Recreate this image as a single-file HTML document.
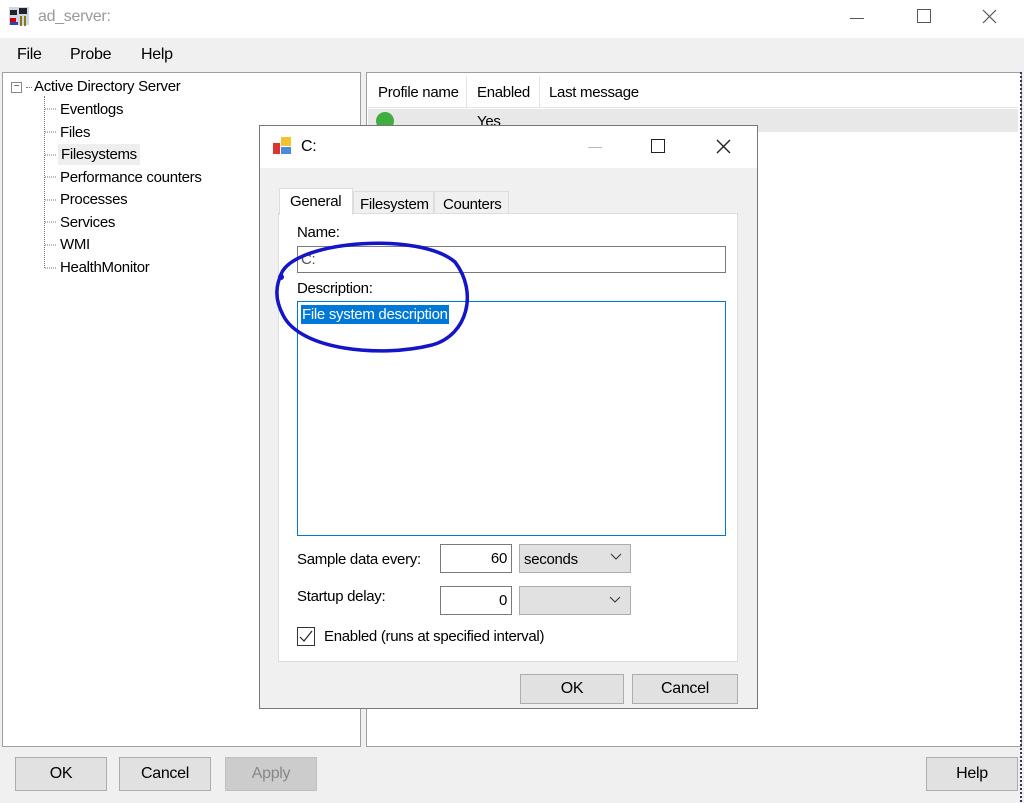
<!DOCTYPE html>
<html><head><style>
*{box-sizing:border-box}
body{margin:0;width:1024px;height:803px;background:#f0f0f0;font-family:"Liberation Sans",sans-serif;font-size:15px;color:#000;position:relative;overflow:hidden;letter-spacing:-0.3px;white-space:nowrap}
.a{position:absolute}
.btn{position:absolute;background:#e1e1e1;border:1px solid #adadad;text-align:center;line-height:31px;font-size:16px}
.tree div{position:absolute;left:60px;font-size:15px;white-space:nowrap}
</style></head><body>
<div class="a" style="left:0;top:0;width:1024px;height:38px;background:#fff"></div>
<svg class="a" style="left:8px;top:6px" width="24" height="22"><rect x="1" y="1" width="20" height="18" fill="#cfd6ea"/><path d="M2 4h7v5H2zM11 2h8v6h-8z" fill="#222"/><path d="M2 12h6v7H2z" fill="#c00"/><path d="M2 16h8v3H2z" fill="#2a44b8"/><path d="M13 10v10M17 10v10" stroke="#8a7a10" stroke-width="2"/></svg>
<div class="a" style="left:38px;top:8px;font-size:16px;color:#999">ad_server:</div>
<div class="a" style="left:850px;top:18px;width:14px;height:1px;background:#555"></div>
<div class="a" style="left:917px;top:9px;width:14px;height:14px;border:1px solid #555"></div>
<svg class="a" style="left:982px;top:9px" width="15" height="15"><path d="M1 1L14 14M14 1L1 14" stroke="#555" stroke-width="1.2"/></svg>
<div class="a" style="left:17px;top:46px;font-size:16px">File</div>
<div class="a" style="left:70px;top:46px;font-size:16px">Probe</div>
<div class="a" style="left:141px;top:46px;font-size:16px">Help</div>
<div class="a" style="left:2px;top:72px;width:359px;height:675px;background:#fff;border:1px solid #a0a0a0"></div>
<div class="a" style="left:366px;top:72px;width:656px;height:675px;background:#fff;border:1px solid #a0a0a0"></div>
<div class="a" style="left:1020px;top:72px;width:2px;height:730px;border-left:2px dotted #335"></div>
<div class="a tree" style="left:0;top:0;width:360px;height:300px">
<div class="a" style="left:11px;top:82px;width:11px;height:11px;border:1px solid #888;font-size:10px;line-height:8px;text-align:center;color:#333">−</div>
<div style="left:34px;top:78px">Active Directory Server</div>
<div class="a" style="left:44px;top:96px;width:1px;height:172px;border-left:1px dotted #777"></div>
<div style="top:101px">Eventlogs</div>
<div style="top:124px">Files</div>
<div style="top:144px;left:58px;background:#eee;padding:2px 3px">Filesystems</div>
<div style="top:169px">Performance counters</div>
<div style="top:191px">Processes</div>
<div style="top:214px">Services</div>
<div style="top:236px">WMI</div>
<div style="top:259px">HealthMonitor</div>
</div>
<svg class="a" style="left:45px;top:0" width="14" height="280"><g stroke="#777" stroke-dasharray="1 1"><path d="M0 109h12M0 132h12M0 155h12M0 177h12M0 200h12M0 222h12M0 245h12M0 268h12"/></g></svg>
<div class="a" style="left:26px;top:87px;width:6px;border-top:1px dotted #777"></div>
<div class="a" style="left:368px;top:76px;width:650px;height:32px;border-bottom:1px solid #e5e5e5"></div>
<div class="a" style="left:378px;top:84px">Profile name</div>
<div class="a" style="left:466px;top:76px;width:1px;height:32px;background:#e5e5e5"></div>
<div class="a" style="left:477px;top:84px">Enabled</div>
<div class="a" style="left:539px;top:76px;width:1px;height:32px;background:#e5e5e5"></div>
<div class="a" style="left:549px;top:84px">Last message</div>
<div class="a" style="left:368px;top:109px;width:650px;height:23px;background:#e8e8e8"></div>
<div class="a" style="left:376px;top:112px;width:18px;height:18px;border-radius:50%;background:#3fae3f"></div>
<div class="a" style="left:477px;top:113px">Yes</div>
<div class="btn" style="left:15px;top:757px;width:92px;height:34px">OK</div>
<div class="btn" style="left:119px;top:757px;width:92px;height:34px">Cancel</div>
<div class="btn" style="left:225px;top:757px;width:92px;height:34px;background:#ccc;border-color:#bfbfbf;color:#888">Apply</div>
<div class="btn" style="left:926px;top:757px;width:92px;height:34px">Help</div>
<div class="a" style="left:747px;top:393px;width:7px;height:7px;border:1px solid #000;background:#fff"></div>
<div class="a" style="left:259px;top:125px;width:499px;height:584px;background:#f0f0f0;border:1px solid #777"></div>
<div class="a" style="left:260px;top:126px;width:497px;height:42px;background:#fff"></div>
<svg class="a" style="left:272px;top:136px" width="22" height="20"><rect x="9" y="1" width="10" height="9" fill="#f2c230"/><rect x="1" y="7" width="7" height="11" fill="#d33"/><rect x="9" y="11" width="10" height="7" fill="#4a8ad8"/></svg>
<div class="a" style="left:301px;top:138px;font-size:16px">C:</div>
<div class="a" style="left:588px;top:147px;width:14px;height:1px;background:#bbb"></div>
<div class="a" style="left:651px;top:139px;width:14px;height:14px;border:1.5px solid #222"></div>
<svg class="a" style="left:716px;top:139px" width="15" height="15"><path d="M1 1L14 14M14 1L1 14" stroke="#222" stroke-width="1.4"/></svg>
<div class="a" style="left:278px;top:213px;width:460px;height:449px;background:#fff;border:1px solid #ddd"></div>
<div class="a" style="left:279px;top:188px;width:74px;height:27px;background:#fff;border:1px solid #ddd;border-bottom:none;padding:4px 0 0 10px">General</div>
<div class="a" style="left:353px;top:191px;width:81px;height:23px;background:#f0f0f0;border:1px solid #ddd;padding:4px 0 0 6px">Filesystem</div>
<div class="a" style="left:434px;top:191px;width:75px;height:23px;background:#f0f0f0;border:1px solid #ddd;padding:4px 0 0 8px">Counters</div>
<div class="a" style="left:297px;top:224px">Name:</div>
<div class="a" style="left:297px;top:246px;width:429px;height:27px;border:1px solid #7a7a7a;padding:4px 3px;color:#555">C:</div>
<div class="a" style="left:297px;top:280px">Description:</div>
<div class="a" style="left:297px;top:301px;width:429px;height:235px;border:1px solid #0078d7"></div>
<div class="a" style="left:301px;top:305px;background:#0078d7;color:#fff;padding:1px 1px">File system description</div>
<div class="a" style="left:297px;top:551px">Sample data every:</div>
<div class="a" style="left:440px;top:544px;width:72px;height:29px;border:1px solid #7a7a7a;background:#fff;text-align:right;padding:5px 4px">60</div>
<div class="a" style="left:519px;top:544px;width:112px;height:29px;border:1px solid #adadad;background:#e1e1e1;padding:6px 4px">seconds</div>
<svg class="a" style="left:610px;top:553px" width="12" height="8"><path d="M1 1l5 5 5-5" fill="none" stroke="#333"/></svg>
<div class="a" style="left:297px;top:588px">Startup delay:</div>
<div class="a" style="left:440px;top:586px;width:72px;height:29px;border:1px solid #7a7a7a;background:#fff;text-align:right;padding:5px 4px">0</div>
<div class="a" style="left:519px;top:586px;width:112px;height:29px;border:1px solid #adadad;background:#e1e1e1"></div>
<svg class="a" style="left:609px;top:596px" width="12" height="8"><path d="M1 1l5 5 5-5" fill="none" stroke="#333"/></svg>
<div class="a" style="left:297px;top:627px;width:18px;height:19px;border:1px solid #333;background:#fff"></div>
<svg class="a" style="left:299px;top:630px" width="14" height="13"><path d="M1 7l4 4 8-10" fill="none" stroke="#222" stroke-width="1.2"/></svg>
<div class="a" style="left:324px;top:628px">Enabled (runs at specified interval)</div>
<div class="btn" style="left:520px;top:674px;width:104px;height:30px;line-height:28px">OK</div>
<div class="btn" style="left:632px;top:674px;width:106px;height:30px;line-height:28px">Cancel</div>
<svg class="a" style="left:0;top:0" width="1024" height="803"><path d="M282 272 C300 240 420 232 455 262 C478 292 468 335 432 345 C380 358 300 350 283 315 C274 298 276 285 282 272" fill="none" stroke="#1414c8" stroke-width="3.5"/><circle cx="281" cy="277" r="3" fill="#1414c8"/></svg>
</body></html>
